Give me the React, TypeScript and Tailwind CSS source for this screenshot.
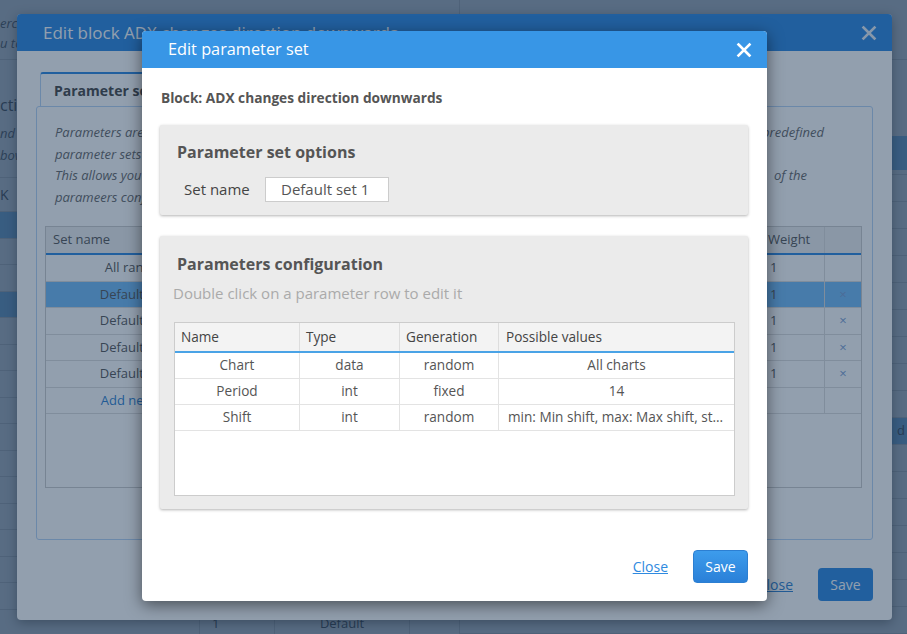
import React from "react";

const params = [
  { name: "Chart", type: "data", gen: "random", values: "All charts" },
  { name: "Period", type: "int", gen: "fixed", values: "14" },
  { name: "Shift", type: "int", gen: "random", values: "min: Min shift, max: Max shift, step: 1" },
];

const sets = [
  { name: "All random", weight: "1", del: false, active: false },
  { name: "Default set 1", weight: "1", del: true, active: true },
  { name: "Default set 2", weight: "1", del: true, active: false },
  { name: "Default set 3", weight: "1", del: true, active: false },
  { name: "Default set 4", weight: "1", del: true, active: false },
];

function CloseIcon({ className }: { className?: string }) {
  return (
    <svg className={className} viewBox="0 0 16 16" fill="none" stroke="currentColor" strokeWidth={2.6} strokeLinecap="square">
      <path d="M2.5 2.5l11 11M13.5 2.5l-11 11" />
    </svg>
  );
}

function Page() {
  const leftRows = Array.from({ length: 15 });
  const rightRows = Array.from({ length: 17 });
  return (
    <div className="flex h-full bg-white text-[#555]">
      <div className="w-[460px] border-r border-[#ddd]">
        <div className="h-[60px] border-b border-[#ddd] pt-[13px] text-[13px] italic leading-[20px] text-[#666]">
          <p>ercise the strategy on a set of data</p>
          <p>u to select the blocks</p>
        </div>
        <div className="h-[118px] border-b border-[#ddd] pt-[33px] text-[13px] leading-[22px]">
          <p className="text-[16px] leading-[24px]">ction</p>
          <p className="mt-[5px] italic text-[#666]">nd the blocks of the strategy</p>
          <p className="italic text-[#666]">bove to change the settings</p>
        </div>
        <div className="flex h-[34px] items-center border-b border-[#ddd] text-[14px]">K</div>
        {leftRows.map((_, i) => (
          <div
            key={i}
            className={`h-[26.5px] border-b border-[#ddd] ${i === 0 || i === 3 ? "bg-[#8ec8f8]" : ""}`}
          />
        ))}
        <div className="flex h-[26.5px] border-b border-[#ddd] text-[13px] leading-[26px]">
          <div className="w-[200px] border-r border-[#ddd]" />
          <div className="w-[75px] border-r border-[#ddd] pl-[12px]">1</div>
          <div className="w-[135px] border-r border-[#ddd] text-center">Default</div>
        </div>
      </div>
      <div className="flex-1">
        <div className="h-[60px] border-b border-[#ddd]" />
        <div className="h-[76px]" />
        <div className="h-[34px] bg-[#8ec8f8]" />
        <div className="h-[5px] border-b border-[#ddd]" />
        {rightRows.map((_, i) => (
          <div
            key={i}
            className={`flex h-[27px] items-center justify-end border-b border-[#ddd] pr-[2px] text-[13px] ${i === 9 ? "bg-[#8ec8f8]" : ""}`}
          >
            {i === 9 ? "d" : ""}
          </div>
        ))}
      </div>
    </div>
  );
}

function BackModal() {
  return (
    <div className="absolute left-[17px] top-[14px] flex h-[606px] w-[875px] flex-col overflow-hidden rounded-[4px] bg-white shadow-[0_3px_12px_rgba(0,0,0,0.35)]">
      <div className="flex h-[37px] items-center justify-between bg-[#2a86e0] pl-[26px] pr-[15px] text-white">
        <span className="text-[17px]">Edit block ADX changes direction downwards</span>
        <CloseIcon className="h-[16px] w-[16px] text-[#e8f0f8]" />
      </div>
      <div className="px-[19px] pt-[21px]">
        <div className="ml-[4px] flex h-[35px] w-[200px] items-center rounded-t-[3px] border-x border-t-2 border-[#b5d3f5] border-t-[#2a86e0] bg-white pl-[13px] text-[14px] font-bold text-[#444]">
          Parameter sets
        </div>
        <div className="-mt-px h-[434px] rounded-[3px] border border-[#b5d3f5] px-[8px] pt-[15px]">
          <div className="pl-[10px] pr-[40px] text-[13px] italic leading-[21.5px] text-[#666]">
            <div className="flex justify-between">
              <span>Parameters are grouped into parameter sets. Each block can use one of the</span>
              <span>predefined</span>
            </div>
            <div>parameter sets or a custom one defined by you.</div>
            <div className="flex justify-between pr-[17px]">
              <span>This allows you to test the strategy with various combinations</span>
              <span>of the</span>
            </div>
            <div>parameers configured for the block.</div>
          </div>
          <div className="mr-[2px] mt-[18px] h-[262px] border border-[#ccc] text-[13px] text-[#555]">
            <div className="grid h-[28px] grid-cols-[185px_1fr_1fr_60px_36px] border-b-2 border-[#2a86e0] bg-[#f0f0f0]">
              <div className="flex items-center border-r border-[#ddd] pl-[7px]">Set name</div>
              <div className="border-r border-[#ddd]" />
              <div className="border-r border-[#ddd]" />
              <div className="flex items-center border-r border-[#ddd] pl-[3px]">Weight</div>
              <div />
            </div>
            {sets.map((s) => (
              <div
                key={s.name}
                className={`grid h-[26.5px] grid-cols-[185px_1fr_1fr_60px_36px] border-b border-[#ddd] ${s.active ? "bg-[#72bcf8]" : "bg-white"}`}
              >
                <div className="flex items-center justify-center border-r border-[#ddd]">{s.name}</div>
                <div className="border-r border-[#ddd]" />
                <div className="border-r border-[#ddd]" />
                <div className="flex items-center border-r border-[#ddd] pl-[5px]">{s.weight}</div>
                <div className="flex items-center justify-center text-[#7a9fd4]">{s.del ? "×" : ""}</div>
              </div>
            ))}
            <div className="grid h-[26.5px] grid-cols-[185px_1fr_1fr_60px_36px] border-b border-[#ddd] bg-white">
              <div className="flex items-center justify-center border-r border-[#ddd] text-[#2d7fd0]">Add new set</div>
              <div className="border-r border-[#ddd]" />
              <div className="border-r border-[#ddd]" />
              <div className="border-r border-[#ddd]" />
              <div />
            </div>
          </div>
        </div>
      </div>
      <div className="mt-auto flex items-center justify-end gap-[25px] pb-[19px] pr-[19px]">
        <a className="text-[14px] text-[#2d7fd0] underline">Close</a>
        <button className="h-[33px] w-[55px] rounded-[4px] bg-[#2a86e0] text-[14px] text-white">Save</button>
      </div>
    </div>
  );
}

function FrontModal() {
  return (
    <div className="absolute left-[142px] top-[31px] flex h-[570px] w-[625px] flex-col rounded-[4px] bg-white shadow-[0_4px_16px_rgba(0,0,0,0.5)]">
      <div className="flex h-[37px] items-center justify-between rounded-t-[4px] bg-[#3896e6] pl-[26px] pr-[15px] text-white">
        <span className="text-[16.3px]">Edit parameter set</span>
        <CloseIcon className="h-[16px] w-[16px]" />
      </div>
      <div className="pl-[18px] pr-[19px] pt-[21px]">
        <div className="pl-[1px] text-[13.7px] font-bold leading-[18px] text-[#555]">
          Block: ADX changes direction downwards
        </div>
        <div className="mt-[18px] h-[90px] rounded-[2px] bg-[#ebebeb] pl-[17px] pt-[16px] shadow-[0_1px_3px_rgba(0,0,0,0.3)]">
          <div className="text-[16px] font-bold leading-[22px] text-[#555]">Parameter set options</div>
          <div className="mt-[14px] flex items-center pl-[7px]">
            <span className="w-[81px] text-[15px] text-[#444]">Set name</span>
            <div className="flex h-[25px] w-[124px] items-center border border-[#ccc] bg-white pl-[15px] text-[15px] text-[#555]">
              Default set 1
            </div>
          </div>
        </div>
        <div className="mt-[21px] h-[273px] rounded-[2px] bg-[#ebebeb] pl-[13px] pr-[13px] pt-[17px] shadow-[0_1px_3px_rgba(0,0,0,0.3)]">
          <div className="pl-[4px] text-[16px] font-bold leading-[22px] text-[#555]">Parameters configuration</div>
          <div className="mt-[8px] text-[15px] leading-[20px] text-[#aaa]">Double click on a parameter row to edit it</div>
          <div className="ml-[1px] mt-[19px] h-[174px] border border-[#ccc] bg-white text-[13.6px] text-[#555]">
            <div className="grid h-[30px] grid-cols-[125px_100px_99px_1fr] border-b-2 border-[#4aa3e6] bg-[#f3f3f3] text-[#444]">
              <div className="flex items-center border-r border-[#ddd] pl-[6px]">Name</div>
              <div className="flex items-center border-r border-[#ddd] pl-[6px]">Type</div>
              <div className="flex items-center border-r border-[#ddd] pl-[6px]">Generation</div>
              <div className="flex items-center pl-[7px]">Possible values</div>
            </div>
            {params.map((p) => (
              <div key={p.name} className="grid h-[26px] grid-cols-[125px_100px_99px_1fr] border-b border-[#e3e3e3]">
                <div className="flex items-center justify-center border-r border-[#e3e3e3]">{p.name}</div>
                <div className="flex items-center justify-center border-r border-[#e3e3e3]">{p.type}</div>
                <div className="flex items-center justify-center border-r border-[#e3e3e3]">{p.gen}</div>
                <div className="min-w-0 self-center truncate px-[9px] text-center">{p.values}</div>
              </div>
            ))}
          </div>
        </div>
      </div>
      <div className="mt-auto flex items-center justify-end gap-[25px] pb-[18px] pr-[19px]">
        <a className="text-[14px] text-[#2f8ae0] underline">Close</a>
        <button className="h-[33px] w-[55px] rounded-[4px] border border-[#2c7fd2] bg-gradient-to-b from-[#3d9cec] to-[#2a80d8] text-[14px] text-white">
          Save
        </button>
      </div>
    </div>
  );
}

export default function App() {
  return (
    <div className="relative h-[634px] w-[907px] overflow-hidden font-['Open_Sans',sans-serif]">
      <Page />
      <div className="absolute inset-0 bg-[rgba(24,52,82,0.47)]" />
      <BackModal />
      <div className="absolute inset-0 bg-[rgba(24,52,82,0.47)]" />
      <FrontModal />
    </div>
  );
}
